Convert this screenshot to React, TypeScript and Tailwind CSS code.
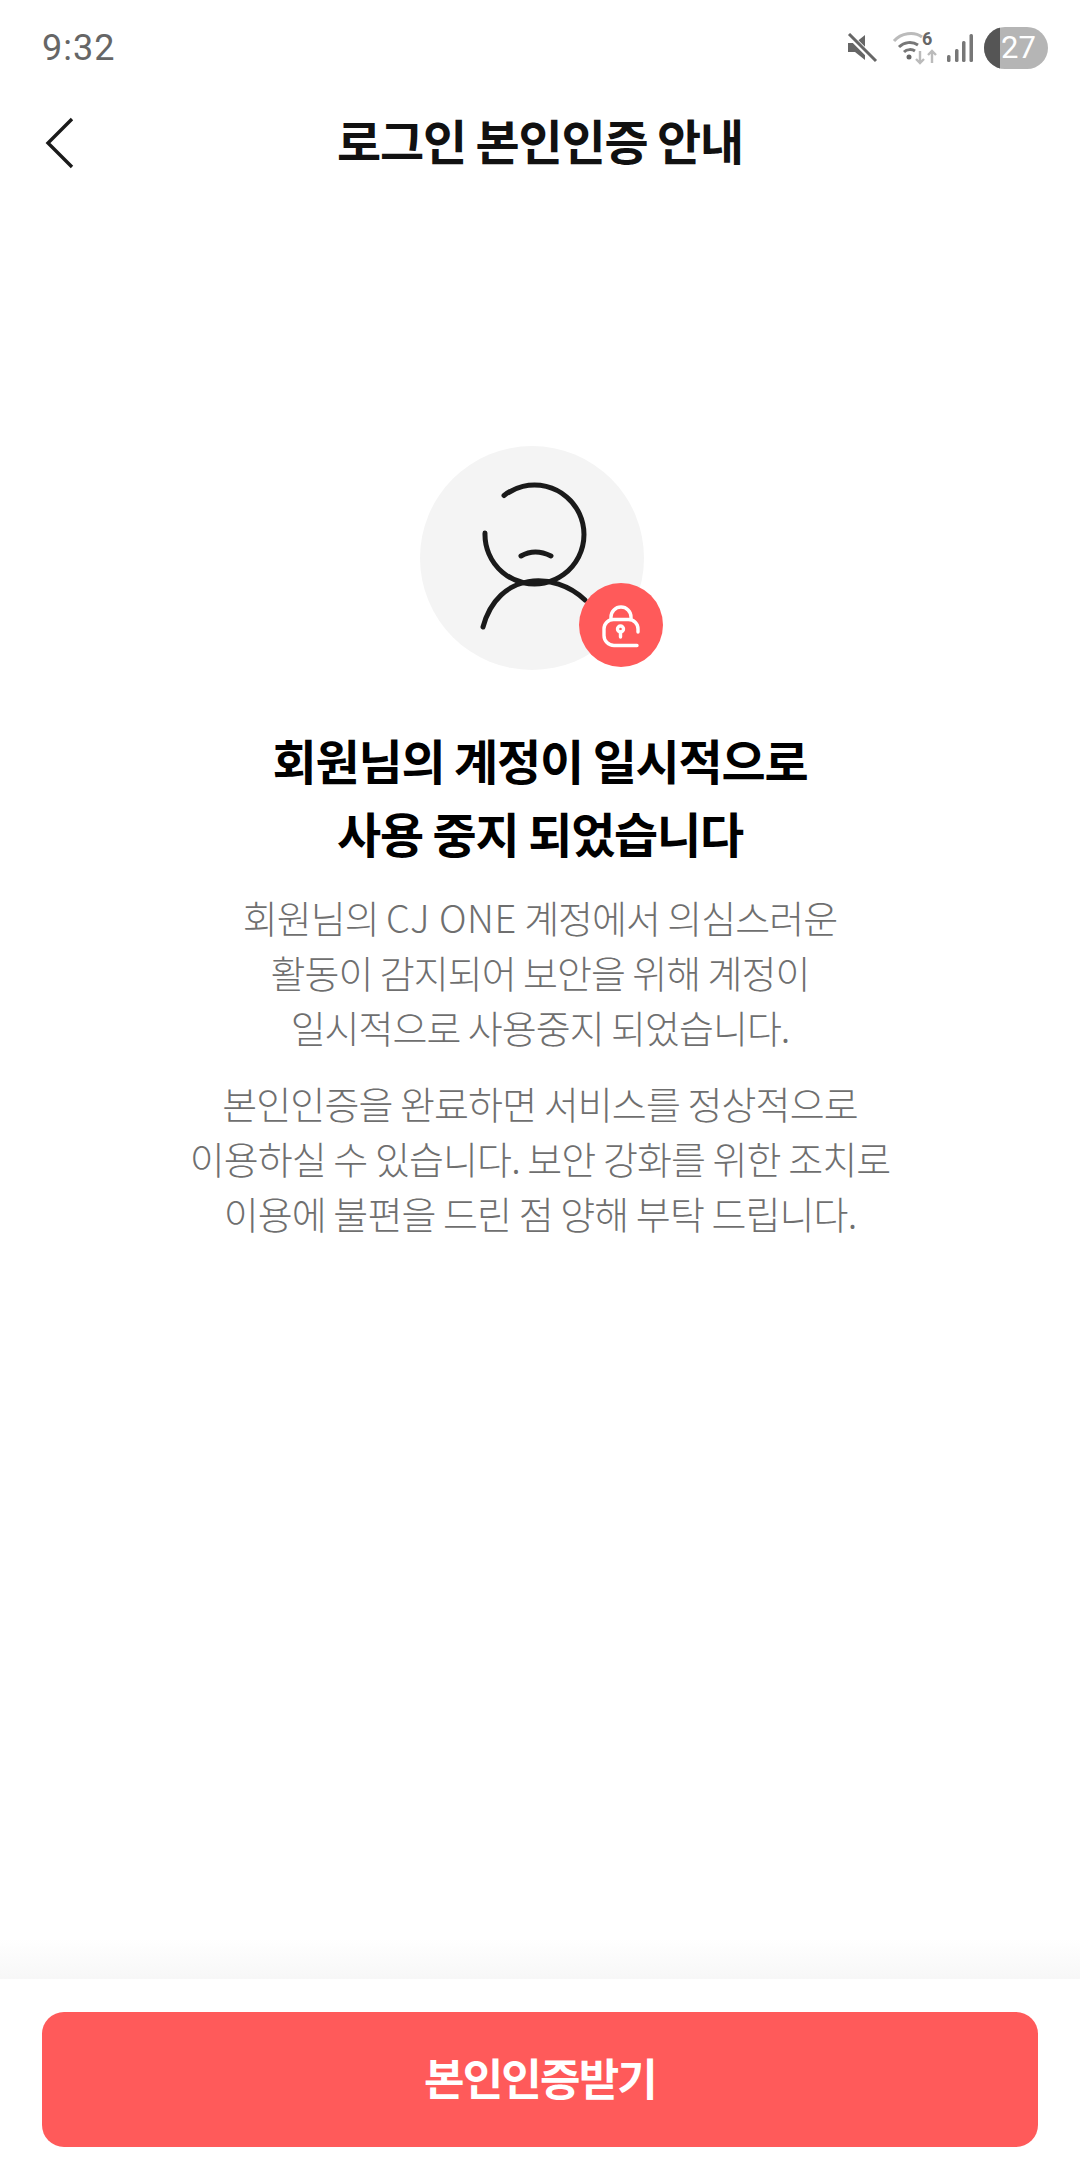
import React from "react";

const KR = "font-['Noto_Sans_CJK_KR','Noto_Sans',sans-serif]";

function StatusIcons() {
  return (
    <div className="flex items-center">
      {/* muted speaker */}
      <svg width="32" height="30" viewBox="0 0 32 30" className="mr-[14px]">
        <path d="M2 10h7l10-8v25l-10-8H2z" fill="#666" />
        <path d="M3 2l27 27" stroke="#fff" strokeWidth="6" />
        <path d="M3 1l27 27" stroke="#666" strokeWidth="3" />
      </svg>
      {/* wifi with data arrows */}
      <svg width="46" height="52" viewBox="0 -8 46 52" className="mr-[8px]">
        <path d="M2 11C9 3 22 1 30 7" fill="none" stroke="#bbb" strokeWidth="3" />
        <path d="M7 17c5-5 13-6 19-2" fill="none" stroke="#777" strokeWidth="3" />
        <path d="M12 22c3-3 8-3 11-1" fill="none" stroke="#777" strokeWidth="3" />
        <circle cx="17" cy="27" r="2.5" fill="#666" />
        <text x="30" y="15" fontSize="18" fontWeight="700" fill="#666" fontFamily="Roboto, sans-serif">6</text>
        <path d="M28 21v12m-4-4l4 4 4-4" fill="none" stroke="#bbb" strokeWidth="2.4" />
        <path d="M40 33V21m-4 4l4-4 4 4" fill="none" stroke="#bbb" strokeWidth="2.4" />
      </svg>
      {/* signal bars */}
      <svg width="28" height="30" viewBox="0 0 28 30" className="mr-[10px]">
        <rect x="1" y="22" width="3.5" height="7" rx="1.5" fill="#777" />
        <rect x="9" y="16" width="3.5" height="13" rx="1.5" fill="#777" />
        <rect x="16" y="8" width="3.5" height="21" rx="1.5" fill="#777" />
        <rect x="23.5" y="1" width="3.5" height="28" rx="1.5" fill="#777" />
      </svg>
      {/* battery pill */}
      <div className="relative flex h-[42px] w-[64px] items-center overflow-hidden rounded-full bg-[#b5b5b5] font-['Roboto',sans-serif] text-[31px] leading-none text-white">
        <div className="h-full w-[16px] bg-[#555]" />
        <span className="pl-[1px]">27</span>
      </div>
    </div>
  );
}

function SuspendedUser() {
  return (
    <div className="relative mr-[16px] h-[224px] w-[224px] rounded-full bg-[#f4f4f4]">
      <svg width="224" height="224" viewBox="0 0 224 224" fill="none" stroke="#1a1a1a" strokeWidth="5" strokeLinecap="round">
        <path d="M84 49.5A49.5 49.5 0 1 1 65 87" />
        <path d="M101 110Q115 102 131 110" />
        <path d="M63 181C78 125 135 125 165 154" />
      </svg>
      {/* lock badge */}
      <div className="absolute left-[159px] top-[137px] flex h-[84px] w-[84px] items-center justify-center rounded-full bg-[#ff5a5a]">
        <svg width="40" height="46" viewBox="0 0 40 46" fill="none" stroke="#fff" strokeWidth="3.4" strokeLinecap="round">
          <path d="M10 17v-2a10 10 0 0 1 20 0v2" />
          <path d="M36 43.5H13A10 10 0 0 1 3 33.5V27A9.5 9.5 0 0 1 12.5 17.5h15A9.5 9.5 0 0 1 37 27v3" />
          <circle cx="19.5" cy="27" r="3" />
          <path d="M19.5 30v5" />
        </svg>
      </div>
    </div>
  );
}

export default function App() {
  return (
    <div className={`flex h-[2158px] w-[1080px] flex-col bg-white ${KR}`}>
      <div className="flex h-[95px] items-center justify-between pl-[42px] pr-[32px]">
        <span className="font-['Roboto',sans-serif] text-[36px] tracking-[1px] text-[#666]">9:32</span>
        <StatusIcons />
      </div>

      <header className="relative flex h-[94px] items-center justify-center">
        <button className="absolute left-[45px] top-[22px]">
          <svg width="30" height="52" viewBox="0 0 30 52" fill="none" stroke="#1a1a1a" strokeWidth="3.4">
            <path d="M27 2L3 26l24 24" />
          </svg>
        </button>
        <h1 className="-translate-y-[3px] text-[48px] font-bold tracking-[-1.2px] text-[#111]">로그인 본인인증 안내</h1>
      </header>

      <main className="flex flex-1 flex-col items-center pt-[257px]">
        <SuspendedUser />
        <h2 className="mt-[53px] text-center text-[48px] font-bold leading-[73px] tracking-[-1.2px] text-black">
          회원님의 계정이 일시적으로
          <br />
          사용 중지 되었습니다
        </h2>
        <p className="mt-[20px] text-center text-[38px] font-light leading-[55px] tracking-[-1px] text-[#6f6f6f]">
          회원님의 <span className="tracking-[0.5px]">CJ ONE</span> 계정에서 의심스러운
          <br />
          활동이 감지되어 보안을 위해 계정이
          <br />
          일시적으로 사용중지 되었습니다.
        </p>
        <p className="mt-[21px] text-center text-[38px] font-light leading-[55px] tracking-[-0.9px] text-[#6f6f6f]">
          본인인증을 완료하면 서비스를 정상적으로
          <br />
          이용하실 수 있습니다. 보안 강화를 위한 조치로
          <br />
          이용에 불편을 드린 점 양해 부탁 드립니다.
        </p>
      </main>

      <div className="h-[40px] bg-gradient-to-b from-white to-[#f7f7f7]" />
      <footer className="flex h-[179px] flex-col px-[42px] pt-[33px]">
        <button className="flex h-[135px] items-center justify-center rounded-[22px] bg-[#ff5a5a] pb-[6px] text-[44px] font-bold tracking-[-1.8px] text-white">
          본인인증받기
        </button>
      </footer>
    </div>
  );
}
